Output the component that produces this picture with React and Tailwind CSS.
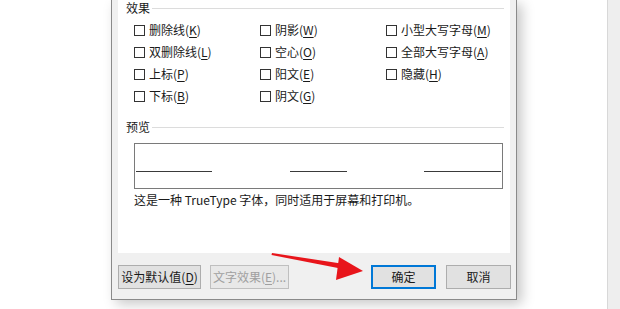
import React from 'react'

const font = { fontFamily: '"Noto Sans CJK SC", "Noto Sans", sans-serif' }

// label text with the access-key letter underlined, e.g. 删除线(K)
function Label({ text, hotkey, tail = '' }) {
  return (
    <span>
      {text}(<span className="underline underline-offset-2">{hotkey}</span>){tail}
    </span>
  )
}

function Check({ text, hotkey }) {
  return (
    <div className="flex h-[22px] items-center">
      <div className="h-[11px] w-[11px] border border-[#333] bg-white" />
      <div className="ml-[4px] text-[12px] leading-[16px] text-[#1a1a1a]">
        <Label text={text} hotkey={hotkey} />
      </div>
    </div>
  )
}

function GroupTitle({ title, className = '' }) {
  return (
    <div className={`flex h-[16px] items-center pl-[8px] pr-[6px] ${className}`}>
      <span className="text-[12px] leading-[16px] text-[#1a1a1a]">{title}</span>
      <div className="ml-[2px] h-px flex-1 bg-[#dcdcdc]" />
    </div>
  )
}

const effects = [
  ['删除线', 'K'], ['阴影', 'W'], ['小型大写字母', 'M'],
  ['双删除线', 'L'], ['空心', 'O'], ['全部大写字母', 'A'],
  ['上标', 'P'], ['阳文', 'E'], ['隐藏', 'H'],
  ['下标', 'B'], ['阴文', 'G'], null,
]

export default function App() {
  return (
    <div className="relative flex h-[309px] w-[620px] overflow-hidden bg-white" style={font}>
      <div className="w-[111px] shrink-0" />

      {/* dialog */}
      <div className="flex h-[300px] w-[406px] shrink-0 flex-col border-x border-b border-[#8a8a8a] bg-[#f0f0f0] shadow-[5px_4px_12px_rgba(0,0,0,0.22)]">
        <div className="mx-[6px] flex h-[253px] flex-col bg-white">
          <GroupTitle title="效果" />

          <div className="ml-[16px] mt-[3px] grid grid-cols-[126px_126px_126px]">
            {effects.map((e, i) =>
              e ? <Check key={i} text={e[0]} hotkey={e[1]} /> : <div key={i} />
            )}
          </div>

          <GroupTitle title="预览" className="mt-[12px]" />

          <div className="ml-[16px] mt-[8px] flex h-[46px] w-[369px] items-start border border-[#7a7a7a] pt-[27px]">
            <div className="ml-px h-px w-[76px] bg-[#3a3a3a]" />
            <div className="ml-[78px] h-px w-[57px] bg-[#3a3a3a]" />
            <div className="ml-auto mr-px h-px w-[77px] bg-[#3a3a3a]" />
          </div>

          <div className="ml-[16px] mt-[3px] text-[12px] leading-[16px] text-[#1a1a1a]">
            这是一种 TrueType 字体，同时适用于屏幕和打印机。
          </div>
        </div>

        <div className="mt-[12px] flex h-[24px] pl-[6px] pr-[5px] text-[12px]">
          <button className="flex w-[83px] items-center justify-center border border-[#adadad] bg-[#e1e1e1] text-[#1a1a1a]">
            <Label text="设为默认值" hotkey="D" />
          </button>
          <button className="ml-[9px] flex w-[79px] items-center justify-center border border-[#bfbfbf] bg-[#e8e8e8] text-[#a0a0a0]">
            <Label text="文字效果" hotkey="E" tail="..." />
          </button>
          <button className="ml-auto flex w-[65px] items-center justify-center border-2 border-[#0078d7] bg-[#e1e1e1] text-[#1a1a1a]">
            确定
          </button>
          <button className="ml-[10px] flex w-[65px] items-center justify-center border border-[#adadad] bg-[#e1e1e1] text-[#1a1a1a]">
            取消
          </button>
        </div>
      </div>

      <div className="flex-1" />
      <div className="h-full w-[13px] shrink-0 border-l border-[#d8d8d8] bg-[#eeeeee]" />

      {/* red annotation arrow */}
      <svg className="pointer-events-none absolute left-0 top-0" width="620" height="309">
        <polygon points="272,253 341,263.5 340.5,268.5 271.5,255" fill="#e8151b" />
        <polygon points="363,271 339,257 336,280" fill="#e8151b" />
      </svg>
    </div>
  )
}
